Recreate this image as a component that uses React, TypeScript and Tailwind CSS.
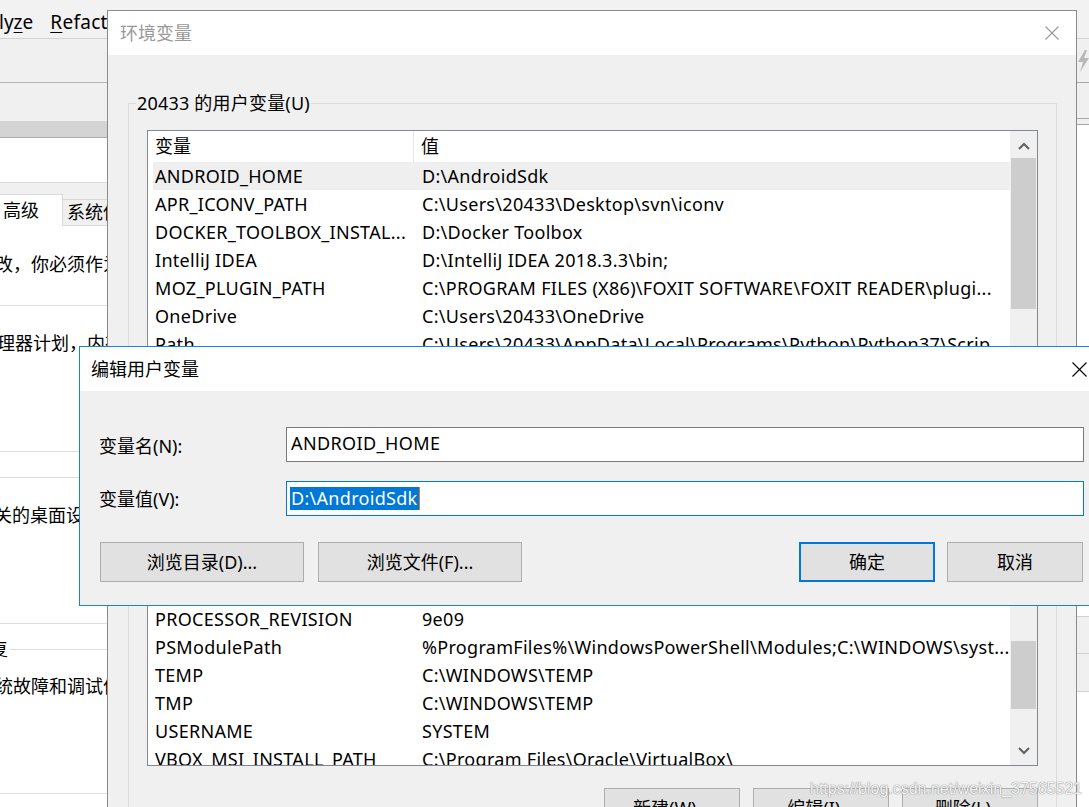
import React from "react";

const font = "font-['Noto_Sans','Noto_Sans_CJK_SC',sans-serif]";

function XIcon({ size, color }: { size: number; color: string }) {
  return (
    <svg width={size} height={size} viewBox={`0 0 ${size} ${size}`}>
      <line x1="0.5" y1="0.5" x2={size - 0.5} y2={size - 0.5} stroke={color} strokeWidth="1.1" />
      <line x1={size - 0.5} y1="0.5" x2="0.5" y2={size - 0.5} stroke={color} strokeWidth="1.1" />
    </svg>
  );
}

function Chevron({ up }: { up: boolean }) {
  return (
    <svg width="12" height="8" viewBox="0 0 12 8">
      <polyline
        points={up ? "1,7 6,2 11,7" : "1,1 6,6 11,1"}
        fill="none"
        stroke="#606060"
        strokeWidth="2"
      />
    </svg>
  );
}

const topRows: [string, string][] = [
  ["ANDROID_HOME", "D:\\AndroidSdk"],
  ["APR_ICONV_PATH", "C:\\Users\\20433\\Desktop\\svn\\iconv"],
  ["DOCKER_TOOLBOX_INSTAL...", "D:\\Docker Toolbox"],
  ["IntelliJ IDEA", "D:\\IntelliJ IDEA 2018.3.3\\bin;"],
  ["MOZ_PLUGIN_PATH", "C:\\PROGRAM FILES (X86)\\FOXIT SOFTWARE\\FOXIT READER\\plugi..."],
  ["OneDrive", "C:\\Users\\20433\\OneDrive"],
  ["Path", "C:\\Users\\20433\\AppData\\Local\\Programs\\Python\\Python37\\Scrip..."],
];

const bottomRows: [string, string][] = [
  ["PROCESSOR_REVISION", "9e09"],
  ["PSModulePath", "%ProgramFiles%\\WindowsPowerShell\\Modules;C:\\WINDOWS\\syst..."],
  ["TEMP", "C:\\WINDOWS\\TEMP"],
  ["TMP", "C:\\WINDOWS\\TEMP"],
  ["USERNAME", "SYSTEM"],
  ["VBOX_MSI_INSTALL_PATH", "C:\\Program Files\\Oracle\\VirtualBox\\"],
];

function Row({ name, value, selected }: { name: string; value: string; selected?: boolean }) {
  return (
    <div
      className={`ml-[5px] flex h-[28px] shrink-0 items-center whitespace-nowrap tracking-[0.3px] ${
        selected ? "bg-[#efefef]" : ""
      }`}
    >
      <div className="w-[261px] shrink-0 overflow-hidden pl-[2px]">{name}</div>
      <div className="overflow-hidden pl-[8px]">{value}</div>
    </div>
  );
}

function WinButton({ label, w, primary }: { label: string; w: string; primary?: boolean }) {
  return (
    <div
      className={`flex h-[40px] shrink-0 items-center justify-center bg-[#e1e1e1] ${w} ${
        primary ? "border-2 border-[#0078d7]" : "border border-[#adadad]"
      }`}
    >
      {label}
    </div>
  );
}

export default function App() {
  return (
    <div className={`relative h-[807px] w-[1089px] overflow-hidden bg-white text-[18px] text-black ${font}`}>
      {/* IDE / system properties background */}
      <div className="flex h-full flex-col">
        <div className="flex h-[39px] shrink-0 items-center border-b border-[#d2d2d2] bg-[#f2f2f2] pt-[6px] text-[19px]">
          <span className="-ml-[1px]">
            ly<span className="underline underline-offset-[3px]">z</span>e
          </span>
          <span className="ml-[17px] tracking-[0.3px]">
            <span className="underline underline-offset-[3px]">R</span>efactor
          </span>
        </div>
        <div className="flex flex-1">
          {/* left strip */}
          <div className="flex w-[107px] shrink-0 flex-col overflow-hidden">
            <div className="h-[44px] shrink-0 border-b border-[#b4b4b4] bg-[#f0f0f0]" />
            <div className="h-[38px] shrink-0 bg-[#f0f0f0]" />
            <div className="h-[17px] shrink-0 border-b border-[#ababab] bg-[#d4d4d4]" />
            <div className="h-[45px] shrink-0 border-b border-[#dadada] bg-white" />
            <div className="flex h-[43px] shrink-0 items-end bg-[#f0f0f0]">
              <div className="flex h-[32px] w-[63px] shrink-0 items-center border-t border-r border-[#d9d9d9] bg-white pl-[3px]">
                高级
              </div>
              <div className="flex h-[27px] flex-1 items-center overflow-hidden whitespace-nowrap border-t border-b border-[#d9d9d9] bg-[#f0f0f0] pl-[4px]">
                系统保护
              </div>
            </div>
            <div className="flex flex-1 flex-col overflow-hidden whitespace-nowrap bg-white">
              <div className="mt-[25px] flex h-[26px] items-center overflow-hidden">
                <span className="-ml-[5px]">改，你必须作为</span>
              </div>
              <div className="mt-[28px] h-px bg-[#dcdcdc]" />
              <div className="mt-[24px] flex h-[26px] items-center overflow-hidden">
                <span className="-ml-[3px]">理器计划，内存</span>
              </div>
              <div className="mt-[95px] h-px bg-[#dcdcdc]" />
              <div className="mt-[25px] h-px bg-[#dcdcdc]" />
              <div className="mt-[24px] flex h-[26px] items-center overflow-hidden">
                <span className="-ml-[6px]">关的桌面设置</span>
              </div>
              <div className="mt-[95px] h-px bg-[#dcdcdc]" />
              <div className="mt-[12px] flex h-[26px] items-center overflow-hidden">
                <span className="-ml-[10px] text-[#000]">复</span>
                <div className="ml-[2px] h-px flex-1 bg-[#dcdcdc]" />
              </div>
              <div className="mt-[11px] flex h-[26px] items-center overflow-hidden">
                <span className="-ml-[5px]">统故障和调试信</span>
              </div>
              <div className="mt-[94px] h-px bg-[#dcdcdc]" />
            </div>
          </div>
          <div className="flex-1" />
          {/* right strip */}
          <div className="flex w-[13px] shrink-0 flex-col">
            <div className="flex h-[44px] shrink-0 items-center border-b border-[#a8a8a8] bg-[#f0f0f0] pl-[2px]">
              <svg width="11" height="22" viewBox="0 0 11 22">
                <polygon points="7,0 0,12 5,12 2,22 11,8 6,8 9,0" fill="#b8b8b8" />
              </svg>
            </div>
            <div className="h-[36px] shrink-0 border-b border-[#a8a8a8] bg-[#f0f0f0]" />
            <div className="h-[6px] shrink-0 border-b border-[#a8a8a8] bg-[#f0f0f0]" />
            <div className="h-[491px] shrink-0 bg-white" />
            <div className="h-[38px] shrink-0 border-t border-b border-[#d0d0d0] bg-[#f0f0f0]" />
            <div className="h-[38px] shrink-0 border-b border-[#d0d0d0] bg-[#f0f0f0]" />
            <div className="flex-1 bg-white" />
          </div>
        </div>
      </div>

      {/* 环境变量 dialog */}
      <div className="absolute left-[107px] top-[10px] flex h-[830px] w-[970px] flex-col border border-[#8a8a8a] bg-[#f0f0f0]">
        <div className="flex h-[44px] shrink-0 items-center justify-between bg-white pl-[12px] pr-[17px] text-[#999999]">
          <span>环境变量</span>
          <XIcon size={14} color="#9a9a9a" />
        </div>
        <div className="ml-[20px] mr-[19px] mt-[48px] flex flex-col border border-[#dcdcdc]">
          <div className="-mt-[14px] ml-[7px] h-[27px] w-fit bg-[#f0f0f0] px-[1px] leading-[27px] tracking-[0.2px]">
            20433 的用户变量(U)
          </div>
          <div className="mx-[18px] mt-[13px] flex h-[636px] border border-[#828790] bg-white">
            <div className="flex flex-1 flex-col overflow-hidden">
              <div className="flex h-[31px] shrink-0 items-center whitespace-nowrap">
                <div className="flex h-full w-[266px] shrink-0 items-center border-r border-[#e5e5e5] pl-[7px]">
                  变量
                </div>
                <div className="pl-[7px]">值</div>
              </div>
              {topRows.map(([n, v], i) => (
                <Row key={n} name={n} value={v} selected={i === 0} />
              ))}
              <div className="h-[247px] shrink-0" />
              {bottomRows.map(([n, v]) => (
                <Row key={n} name={n} value={v} />
              ))}
            </div>
            <div className="flex w-[27px] shrink-0 flex-col bg-[#f0f0f0]">
              <div className="flex h-[27px] shrink-0 items-center justify-center pt-[2px]">
                <Chevron up />
              </div>
              <div className="mx-px h-[151px] shrink-0 bg-[#cdcdcd]" />
              <div className="h-[332px] shrink-0" />
              <div className="mx-px h-[68px] shrink-0 bg-[#cdcdcd]" />
              <div className="flex-1" />
              <div className="flex h-[27px] shrink-0 items-center justify-center pb-[2px]">
                <Chevron up={false} />
              </div>
            </div>
          </div>
          <div className="mr-[18px] mt-[22px] flex justify-end gap-[13px]">
            <WinButton label="新建(W)..." w="w-[136px]" />
            <WinButton label="编辑(I)..." w="w-[136px]" />
            <WinButton label="删除(L)..." w="w-[136px]" />
          </div>
        </div>
      </div>

      {/* 编辑用户变量 dialog */}
      <div className="absolute left-[79px] top-[346px] flex h-[260px] w-[1025px] flex-col border border-[#1883d7] bg-[#f0f0f0]">
        <div className="flex h-[44px] shrink-0 items-center justify-between bg-white pl-[11px] pr-[16px]">
          <span>编辑用户变量</span>
          <XIcon size={15} color="#000000" />
        </div>
        <div className="flex flex-1 flex-col pt-[36px]">
          <div className="flex items-center">
            <div className="w-[206px] shrink-0 pl-[19px] pt-[3px]">变量名(N):</div>
            <div className="flex h-[35px] w-[798px] shrink-0 items-center border border-[#7a7a7a] bg-white pb-[2px] pl-[4px] tracking-[0.4px]">
              ANDROID_HOME
            </div>
          </div>
          <div className="mt-[19px] flex items-center">
            <div className="w-[206px] shrink-0 pl-[19px] pt-[2px]">变量值(V):</div>
            <div className="flex h-[35px] w-[798px] shrink-0 items-center border border-[#0078d7] bg-white pl-[3px]">
              <span className="flex h-[23px] items-center bg-[#0078d7] pl-px pr-px tracking-[0.3px] text-white">D:\AndroidSdk</span>
              <span className="h-[23px] w-px bg-[#e07a1f]" />
            </div>
          </div>
          <div className="mt-[26px] flex pl-[20px] pr-[20px]">
            <WinButton label="浏览目录(D)..." w="w-[204px]" />
            <div className="ml-[14px]">
              <WinButton label="浏览文件(F)..." w="w-[204px]" />
            </div>
            <div className="ml-auto flex gap-[12px]">
              <WinButton label="确定" w="w-[136px]" primary />
              <WinButton label="取消" w="w-[136px]" />
            </div>
          </div>
        </div>
      </div>

      {/* watermark */}
      <div className="absolute left-[810px] top-[780px] font-['Liberation_Sans',Arial,sans-serif] text-[16px] leading-[18px] text-[#f4f4f4] [text-shadow:0_0_1px_#8a8a8a,0_0_1px_#8a8a8a]">
        https://blog.csdn.net/weixin_37565521
      </div>
    </div>
  );
}
